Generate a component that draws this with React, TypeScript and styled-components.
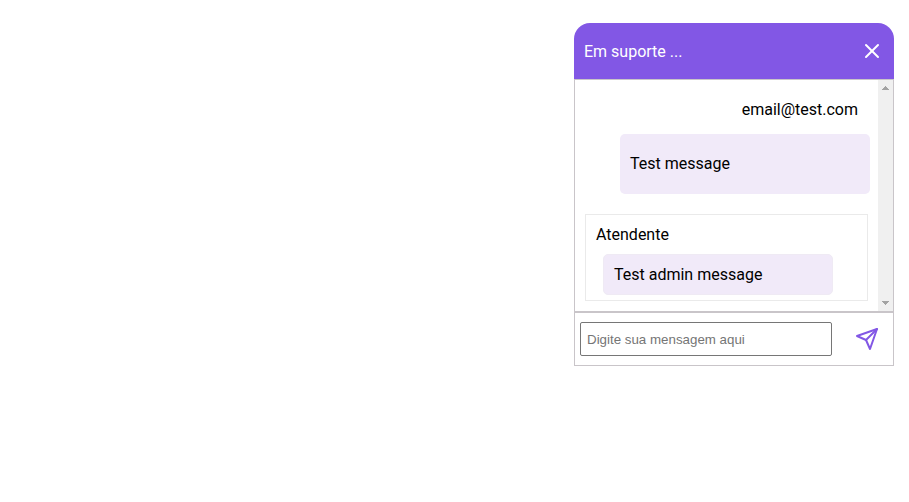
import React from 'react';
import styled, { createGlobalStyle } from 'styled-components';
import { FiSend, FiX } from 'react-icons/fi';

const GlobalStyle = createGlobalStyle`
  * {
    margin: 0;
    padding: 0;
    box-sizing: border-box;
  }

  body {
    background: #fff;
    color: #000;
    font: 400 16px/19px Roboto, sans-serif;
  }

  button {
    border: 0;
    background: transparent;
    cursor: pointer;
  }
`;

const Page = styled.main`
  display: flex;
  justify-content: flex-end;
  padding: 23px 15px 0 0;
`;

const Chat = styled.section`
  width: 320px;
  display: flex;
  flex-direction: column;
`;

const Header = styled.header`
  height: 56px;
  display: flex;
  align-items: center;
  justify-content: space-between;
  padding: 0 10px;
  border-radius: 16px 16px 0 0;
  background: #8257e5;
  color: #fff;
`;

const IconButton = styled.button<{ $color: string }>`
  display: flex;
  color: ${({ $color }) => $color};
`;

const Body = styled.div`
  height: 233px;
  display: flex;
  border: 1px solid #c9c5c9;
`;

const Messages = styled.div`
  flex: 1;
  display: flex;
  flex-direction: column;
  padding: 20px 10px 0;
`;

const Email = styled.span`
  align-self: flex-end;
  margin-right: 10px;
`;

const ClientMessage = styled.p`
  width: 250px;
  height: 60px;
  flex-shrink: 0;
  align-self: flex-end;
  margin: 15px -2px 20px 0;
  padding: 20px 10px;
  border-radius: 5px;
  background: #f1eaf9;
`;

const AdminBox = styled.div`
  height: 87px;
  padding: 10px;
  border: 1px solid #eaeaea;
`;

const AdminMessage = styled.p`
  width: 230px;
  height: 41px;
  display: flex;
  align-items: center;
  margin: 10px 0 0 7px;
  padding: 0 10px;
  border: 1px solid #efeaf4;
  border-radius: 5px;
  background: #f1eaf9;
`;

const Scrollbar = styled.div`
  width: 15px;
  display: flex;
  flex-direction: column;
  align-items: center;
  justify-content: space-between;
  padding: 6px 0;
  background: #f0f0f0;
`;

const Arrow = styled.svg`
  display: block;
  width: 7px;
  height: 4px;
  fill: #a3a3a3;
`;

const Footer = styled.form`
  height: 54px;
  display: flex;
  align-items: center;
  justify-content: space-between;
  padding: 0 14px 0 5px;
  border: 1px solid #c9c5c9;
`;

const MessageInput = styled.input`
  width: 252px;
  height: 34px;
  padding: 0 6px;
  border: 1px solid #767676;
  border-radius: 2px;
  font: 13.333px 'Liberation Sans', Arial, sans-serif;

  &::placeholder {
    color: #757575;
  }
`;

export default function App() {
  return (
    <>
      <GlobalStyle />
      <Page>
        <Chat>
          <Header>
            <span>Em suporte ...</span>
            <IconButton type="button" aria-label="Fechar" $color="#fff">
              <FiX size={24} />
            </IconButton>
          </Header>
          <Body>
            <Messages>
              <Email>email@test.com</Email>
              <ClientMessage>Test message</ClientMessage>
              <AdminBox>
                <span>Atendente</span>
                <AdminMessage>Test admin message</AdminMessage>
              </AdminBox>
            </Messages>
            <Scrollbar>
              <Arrow viewBox="0 0 7 4" shapeRendering="crispEdges">
                <path d="M3 0h1v1h1v1h1v1h1v1H0V3h1V2h1V1h1z" />
              </Arrow>
              <Arrow viewBox="0 0 7 4" shapeRendering="crispEdges">
                <path d="M0 0h7v1H6v1H5v1H4v1H3V3H2V2H1V1H0z" />
              </Arrow>
            </Scrollbar>
          </Body>
          <Footer>
            <MessageInput placeholder="Digite sua mensagem aqui" />
            <IconButton type="button" aria-label="Enviar" $color="#8257e5">
              <FiSend size={24} />
            </IconButton>
          </Footer>
        </Chat>
      </Page>
    </>
  );
}
